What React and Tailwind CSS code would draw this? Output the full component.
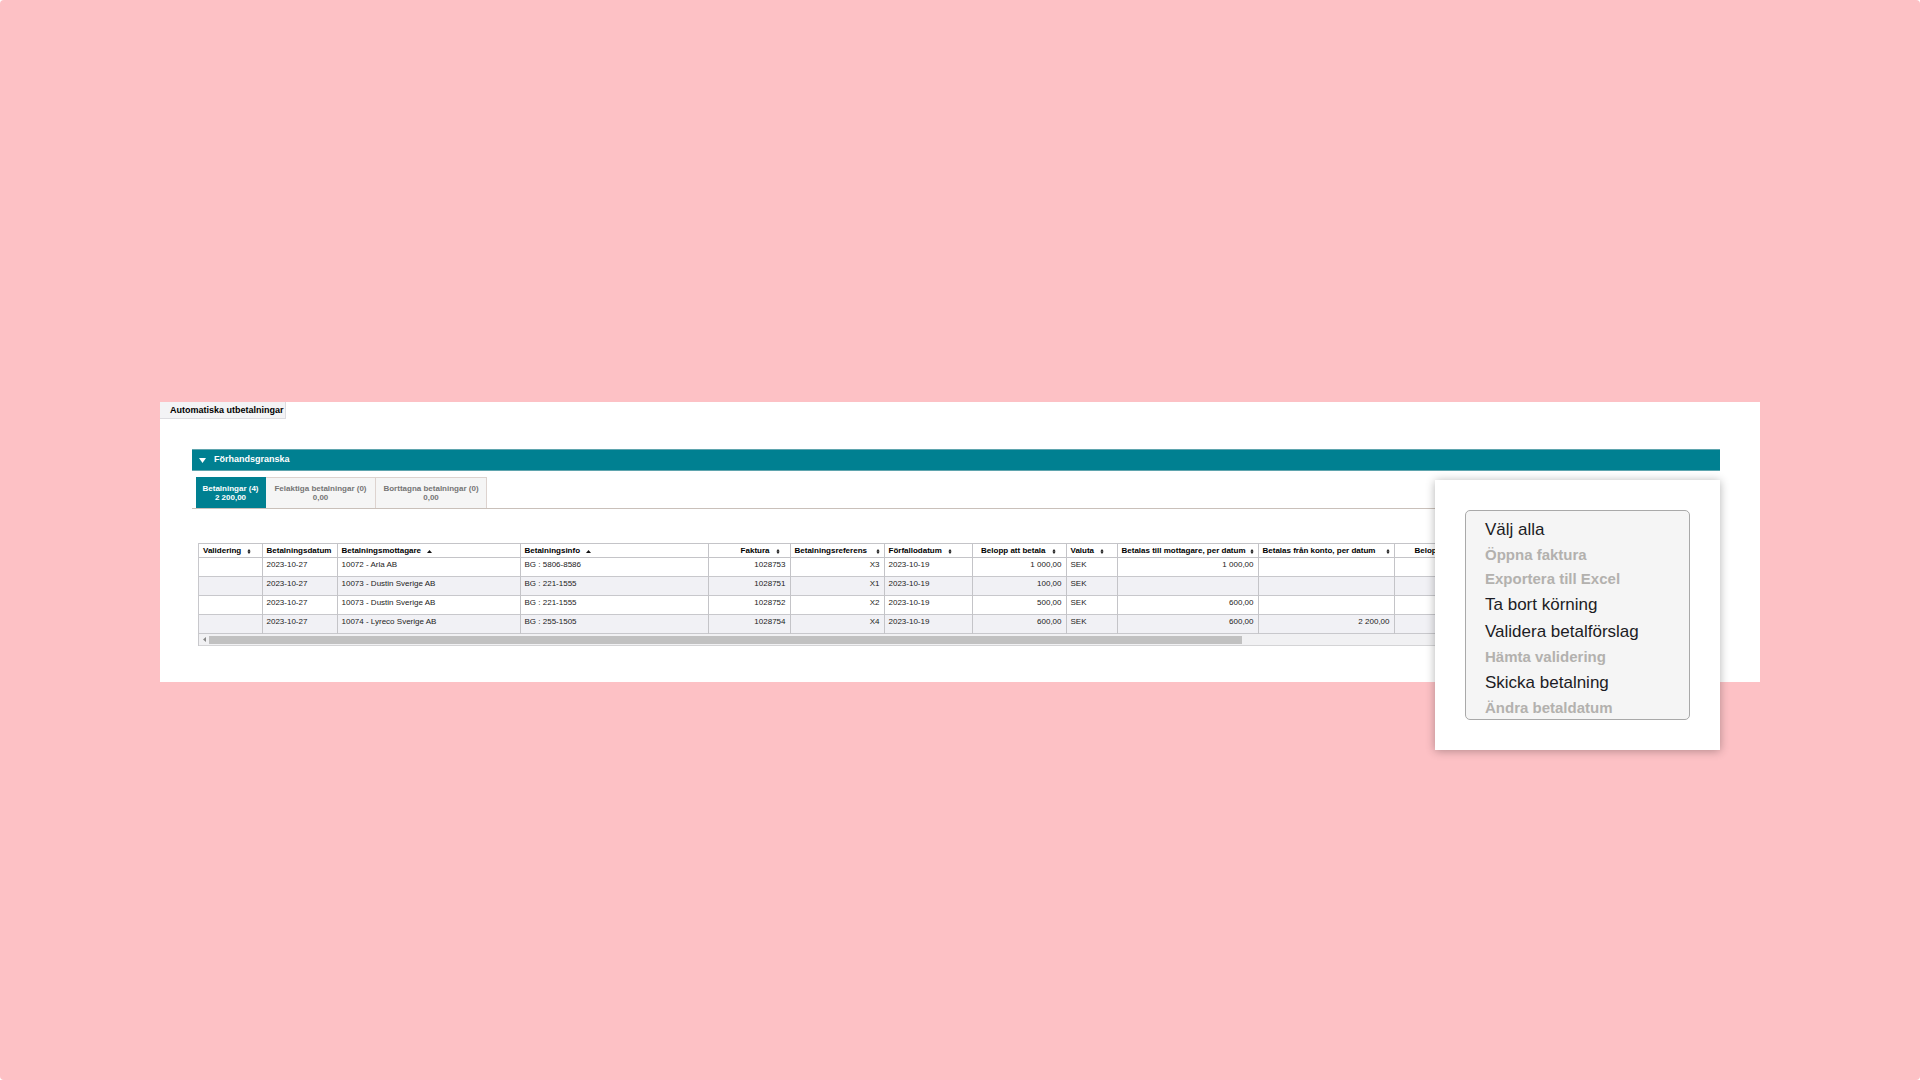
import React, { useState } from "react";

const tabs = [
  { id: "payments", label: "Betalningar (4)", amount: "2 200,00", width: "w-[70px]" },
  { id: "faulty", label: "Felaktiga betalningar (0)", amount: "0,00", width: "w-[110px]" },
  { id: "removed", label: "Borttagna betalningar (0)", amount: "0,00", width: "w-[111px]" },
];

const columns = [
  { key: "validation", label: "Validering", width: "w-[63px]", sort: "both" },
  { key: "date", label: "Betalningsdatum", width: "w-[75px]" },
  { key: "receiver", label: "Betalningsmottagare", width: "w-[183px]", sort: "up" },
  { key: "info", label: "Betalningsinfo", width: "w-[188px]", sort: "up" },
  { key: "invoice", label: "Faktura", width: "w-[82px]", sort: "both", right: true },
  { key: "reference", label: "Betalningsreferens", width: "w-[94px]", sort: "both", right: true, tight: true },
  { key: "due", label: "Förfallodatum", width: "w-[88px]", sort: "both" },
  { key: "amount", label: "Belopp att betala", width: "w-[94px]", sort: "both", right: true },
  { key: "currency", label: "Valuta", width: "w-[51px]", sort: "both" },
  { key: "toReceiver", label: "Betalas till mottagare, per datum", width: "w-[141px]", sort: "both", right: true, tight: true },
  { key: "fromAccount", label: "Betalas från konto, per datum", width: "w-[136px]", sort: "both", right: true, tight: true },
  { key: "rest", label: "Belopp", width: "w-auto", indent: true },
];

const rows = [
  { date: "2023-10-27", receiver: "10072 - Arla AB", info: "BG : 5806-8586", invoice: "1028753", reference: "X3", due: "2023-10-19", amount: "1 000,00", currency: "SEK", toReceiver: "1 000,00" },
  { date: "2023-10-27", receiver: "10073 - Dustin Sverige AB", info: "BG : 221-1555", invoice: "1028751", reference: "X1", due: "2023-10-19", amount: "100,00", currency: "SEK" },
  { date: "2023-10-27", receiver: "10073 - Dustin Sverige AB", info: "BG : 221-1555", invoice: "1028752", reference: "X2", due: "2023-10-19", amount: "500,00", currency: "SEK", toReceiver: "600,00" },
  { date: "2023-10-27", receiver: "10074 - Lyreco Sverige AB", info: "BG : 255-1505", invoice: "1028754", reference: "X4", due: "2023-10-19", amount: "600,00", currency: "SEK", toReceiver: "600,00", fromAccount: "2 200,00" },
];

const menuItems = [
  { label: "Välj alla" },
  { label: "Öppna faktura", disabled: true },
  { label: "Exportera till Excel", disabled: true },
  { label: "Ta bort körning" },
  { label: "Validera betalförslag" },
  { label: "Hämta validering", disabled: true },
  { label: "Skicka betalning" },
  { label: "Ändra betaldatum", disabled: true },
];

function SortIcon({ type }) {
  if (type === "up") {
    return (
      <svg className="w-[5px] h-[3px] shrink-0" viewBox="0 0 5 3" fill="#111">
        <path d="M2.5 0 5 3H0z" />
      </svg>
    );
  }
  return (
    <svg className="w-[4px] h-[5px] shrink-0" viewBox="0 0 4 5" fill="#222">
      <path d="M2 0 3.6 2.3H.4zM2 5 .4 2.7h3.2zM1.4 2h1.2v1H1.4z" />
    </svg>
  );
}

function PaymentTable() {
  return (
    <div className="overflow-hidden border-l border-[#c8c8cc]">
      <table className="w-full table-fixed border-collapse text-[8px] leading-[10px] text-[#222]">
        <thead>
          <tr className="h-[14px] border-y border-[#c4c4c8]">
            {columns.map((col) => (
              <th
                key={col.key}
                scope="col"
                className={`${col.width} p-0 border-r border-[#c4c4c8] last:border-r-0`}
              >
                <button
                  type="button"
                  className={`flex w-full items-center whitespace-nowrap pt-px font-bold text-black ${
                    col.indent ? "pl-5" : "pl-1"
                  } ${col.tight ? "justify-between pr-1" : "gap-[6px]"} ${
                    col.right && !col.tight ? "justify-end pr-[10px]" : ""
                  }`}
                >
                  {col.label}
                  {col.sort && <SortIcon type={col.sort} />}
                </button>
              </th>
            ))}
          </tr>
        </thead>
        <tbody>
          {rows.map((row) => (
            <tr key={row.invoice} className="h-[19px] border-b border-[#c8c8cc] even:bg-[#f1f1f5]">
              {columns.map((col) => (
                <td
                  key={col.key}
                  className={`px-1 pt-[2px] pb-0 align-top whitespace-nowrap border-r border-[#c4c4c8] last:border-r-0 ${
                    col.right ? "text-right" : ""
                  }`}
                >
                  {row[col.key]}
                </td>
              ))}
            </tr>
          ))}
        </tbody>
      </table>

      {/* Horizontal scrollbar */}
      <div className="flex h-[12px] items-center border-b border-[#d4d4d6] bg-[#f1f1f3]">
        <div className="flex w-[10px] justify-center">
          <svg className="w-[3px] h-[5px]" viewBox="0 0 3 5" fill="#888">
            <path d="M3 0v5L0 2.5z" />
          </svg>
        </div>
        <div className="h-[8px] w-[68.3%] bg-[#c1c1c1]" />
      </div>
    </div>
  );
}

function ActionMenu() {
  return (
    <div className="absolute right-10 top-[78px] w-[285px] bg-white p-[30px] shadow-[0_1px_9px_rgba(0,0,0,0.3)]">
      <div className="flex h-[210px] flex-col rounded-[5px] border border-[#a9a9a9] bg-[#f5f5f5] pt-[5px]">
        {menuItems.map((item) => (
          <button
            key={item.label}
            type="button"
            disabled={item.disabled}
            className={`shrink-0 pl-[19px] text-left ${
              item.disabled
                ? "h-[24px] text-[15px] leading-[24px] font-bold text-[#b3b1ae]"
                : "h-[27px] text-[17px] leading-[27px] text-[#1c1c24]"
            }`}
          >
            {item.label}
          </button>
        ))}
      </div>
    </div>
  );
}

function App() {
  const [activeTab, setActiveTab] = useState("payments");
  const [open, setOpen] = useState(true);

  return (
    <div className="bg-white font-['Liberation_Sans',Arial,sans-serif]">
      <main className="flex min-h-screen items-center rounded-[4px] bg-[#fdc1c5] px-40 pt-1">
        <section className="relative w-full bg-white pb-[36px]">
          <h1 className="h-[17px] w-[126px] border-r border-b border-[#dcdce0] bg-[#f3f3f5] pl-[10px] text-[9px] leading-[16px] font-bold whitespace-nowrap text-black">
            Automatiska utbetalningar
          </h1>

          <div className="mt-[30px] ml-8 mr-10">
            <button
              type="button"
              onClick={() => setOpen(!open)}
              className="flex h-[22px] w-full items-center gap-2 border-y border-[#5fa5ae] bg-[#008091] pl-[7px] text-[9px] font-bold text-white"
            >
              <svg className="w-[7px] h-[5px]" viewBox="0 0 7 5" fill="#fff">
                <path d="M0 0h7L3.5 5z" />
              </svg>
              Förhandsgranska
            </button>

            {open && (
              <>
                <div className="mt-[6px] flex border-b border-[#c9c0ba] pl-1">
                  {tabs.map((tab) => (
                    <button
                      key={tab.id}
                      type="button"
                      onClick={() => setActiveTab(tab.id)}
                      className={`${tab.width} h-[31px] border-t border-r text-center text-[8px] leading-[9px] font-bold whitespace-nowrap ${
                        activeTab === tab.id
                          ? "border-[#008091] bg-[#008091] text-white"
                          : "border-[#ddd3cf] bg-[#f5f5f5] text-[#757575]"
                      }`}
                    >
                      <span className="block">{tab.label}</span>
                      <span className="block">{tab.amount}</span>
                    </button>
                  ))}
                </div>
                <div className="mt-[34px] ml-[6px] mr-2">
                  <PaymentTable />
                </div>
              </>
            )}
          </div>

          <ActionMenu />
        </section>
      </main>
    </div>
  );
}

export default App;
